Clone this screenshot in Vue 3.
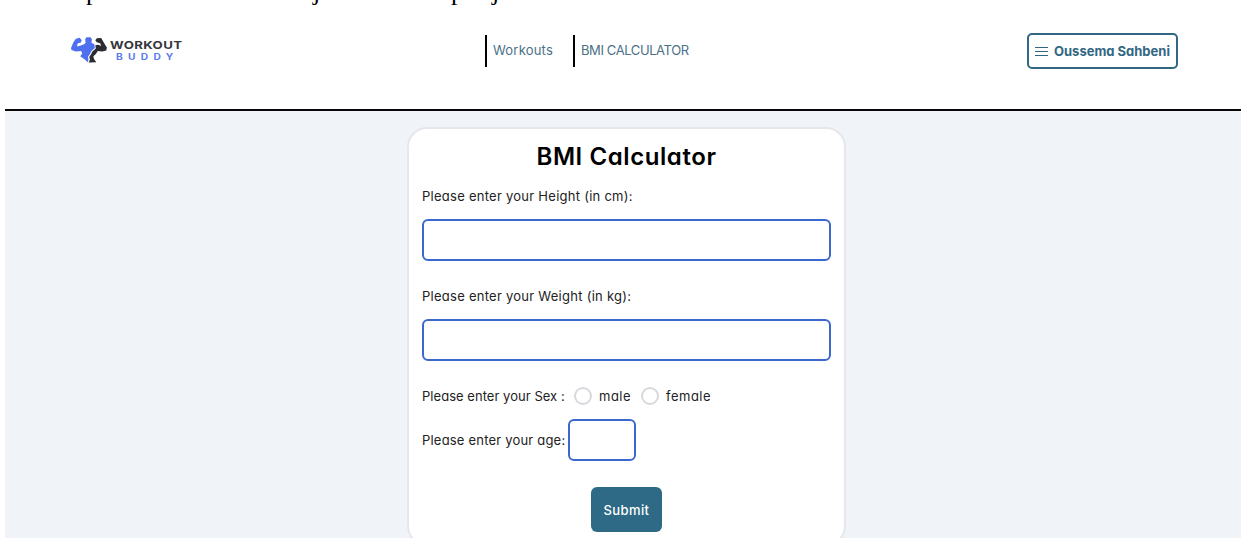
<script setup>
const links = [{ text: 'Workouts', cls: 'workouts' }, { text: 'BMI CALCULATOR', cls: 'bmi' }]
const measures = ['Please enter your Height (in cm):', 'Please enter your Weight (in kg):']
const sexes = ['male', 'female']
</script>

<template>
  <div class="page">
    <div class="caption"><span class="c1">p</span><span class="c2">j</span><span class="c3">p</span><span class="c4">j</span></div>
    <header class="header">
      <div class="brand">
        <svg class="mark" viewBox="0 0 38 28">
          <path fill="#4d6ff0" d="M5 2.5 9 1.5 11 4 10 6.5 7 7 6 10.5 10 9.5 13.5 8 15 6.500 14.500 3 16 1 20 .8 21.500 3 21 6.500 24 8 24.500 12 21 15 19.500 18 17.500 21 18 24 17 26.500 14.500 24 9.500 20.500 11.500 17.500 10.500 15 5 15.500 .5 14 0 12 2.500 6Z" />
          <path fill="#2b2c31" d="M26.500 2 31 1.800 33.500 6 36.800 11.500 36.300 14.500 32 15.500 27.500 15 25.500 18 23 20.500 23.500 23 26 26.500 18 26.800 19.500 24 18.800 21 20.500 18.500 22 15.500 25.500 12.500 25 9 28 8.500 31 10 30 7 26.500 6 25 4Z" />
        </svg>
        <div class="wordmark"><b>WORKOUT</b><i>BUDDY</i></div>
      </div>
      <nav class="nav"><a v-for="l in links" :key="l.cls" :class="l.cls">{{ l.text }}</a></nav>
      <button class="user">
        <svg viewBox="0 0 13 11"><path d="M0 1.500h13M0 5.500h13M0 9.500h13" stroke="#316783" stroke-width="1" /></svg>
        <span>Oussema Sahbeni</span>
      </button>
    </header>
    <main class="main">
      <form class="card">
        <h1>BMI Calculator</h1>
        <label v-for="m in measures" :key="m" class="measure"><span>{{ m }}</span><input type="text" /></label>
        <div class="sex">
          <span class="sexlabel">Please enter your Sex :</span>
          <label v-for="s in sexes" :key="s" :class="s"><input type="radio" name="sex" /><span>{{ s }}</span></label>
        </div>
        <div class="age"><span>Please enter your age:</span><input type="text" /></div>
        <button type="button" class="submit">Submit</button>
      </form>
    </main>
  </div>
</template>

<style>
body { background: #fff; overflow: hidden; }
</style>
<style scoped>
* { box-sizing: border-box; }
.page { height: 538px; overflow: hidden; font-family: Inter, "Liberation Sans", sans-serif; font-feature-settings: "cv11"; font-size: 13px; color: #222; display: flex; flex-direction: column; position: relative; }
.caption { position: absolute; inset: 0 0 auto; height: 10px; overflow: hidden; font: 26px/26px "Liberation Serif", serif; color: #000; }
.caption span { position: absolute; top: -21px; }
.c1 { left: 86px; } .c2 { left: 313px; } .c3 { left: 451px; } .c4 { left: 492px; }
.header { height: 111px; flex: none; margin: 0 1px 0 5px; padding: 33px 63px 0 66px; border-bottom: 2px solid #08080b; display: grid; grid-template-columns: 414px 1fr auto; align-items: start; }
.brand { display: flex; padding-top: 3px; gap: 2px; }
.mark { width: 37px; height: 28px; }
.wordmark { display: flex; flex-direction: column; align-items: flex-start; padding-top: 3px; line-height: 12px; }
.wordmark b { font-size: 11px; font-weight: 700; color: #35363b; letter-spacing: .3px; transform: scaleX(1.2); transform-origin: 0 50%; }
.wordmark i { font-size: 8.5px; font-style: normal; font-weight: 700; color: #5d7bf0; letter-spacing: 4.4px; margin-left: 6px; transform: scaleX(1.2); transform-origin: 0 50%; }
.nav { display: flex; color: #4a7187; padding-top: 2px; }
.nav a { border-left: 2px solid #000; padding-left: 6px; height: 32px; line-height: 31px; white-space: nowrap; }
.workouts { width: 88px; letter-spacing: .2px; }
.nav .bmi { letter-spacing: -.4px; }
.user { height: 36px; width: 151px; border: 2px solid #316783; border-radius: 5px; background: #fff; color: #316783; font: 700 13px Inter, sans-serif; font-feature-settings: "cv11"; padding: 0 6px; display: flex; align-items: center; gap: 6px; white-space: nowrap; }
.user svg { width: 13px; height: 11px; flex: none; }
.main { flex: 1; margin: 0 1px 0 5px; padding: 16px 0 0 402px; background: #f0f4f9; }
.card { width: 439px; height: 419px; border: 2px solid #e5e7eb; border-radius: 20px; background: #fff; padding: 9px 13px 0; display: flex; flex-direction: column; }
h1 { margin: 0; height: 38px; font-size: 24px; font-weight: 600; line-height: 37px; letter-spacing: .58px; text-align: center; color: #000; }
.measure { height: 100px; padding-top: 10px; display: flex; flex-direction: column; gap: 13px; }
.measure span { line-height: 20px; letter-spacing: .26px; }
input[type="text"] { appearance: none; height: 42px; border: 2px solid #3b68cf; border-radius: 6px; background: #fff; padding: 0; margin: 0; outline: 0; width: 100%; }
.sex { display: flex; height: 40px; padding-top: 10px; align-items: flex-start; line-height: 20px; }
.sexlabel { width: 152px; letter-spacing: .04px; }
.sex label { display: flex; gap: 7px; align-items: center; letter-spacing: .5px; }
.male { width: 67px; }
.sex input { appearance: none; flex: none; width: 18px; height: 18px; border: 2px solid #d7d9dd; border-radius: 50%; margin: 0; background: #fff; }
.age { display: flex; align-items: center; height: 46px; margin-top: 1px; }
.age span { width: 146px; flex: none; letter-spacing: .2px; }
.age input[type="text"] { width: 68px; }
.submit { align-self: center; margin-top: 24px; width: 71px; height: 45px; border: 0; border-radius: 6px; background: #2e6a85; color: #fff; padding: 0; font: 500 13px Inter, sans-serif; letter-spacing: .4px; }
</style>
